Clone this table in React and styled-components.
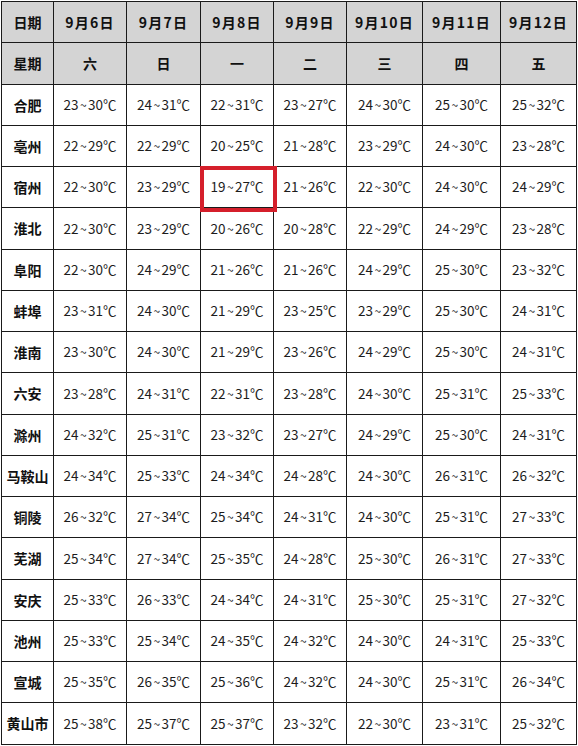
import React from "react";
import styled, { createGlobalStyle } from "styled-components";

const Global = createGlobalStyle`
  html, body { margin: 0; padding: 0; background: #ffffff; }
  body { font-family: "Noto Sans CJK SC", "Noto Sans", sans-serif; }
`;

const Wrap = styled.div`
  padding: 1px 0 0 1px;
`;

const Table = styled.table`
  border-collapse: collapse;
  table-layout: fixed;
  width: 575px;
  font-family: "Noto Sans CJK SC", "Noto Sans", sans-serif;
  color: #111;
`;

const Col = styled.col`
  width: ${(p) => p.$w}px;
`;

const Row = styled.tr`
  height: 41.25px;
`;

const Cell = styled.td`
  border: 1px solid #1a1a1a;
  padding: 0;
  text-align: center;
  vertical-align: middle;
  font-size: 14px;
  line-height: 1;
  white-space: nowrap;
`;

const HeadCell = styled(Cell)`
  background: #d4d4d4;
  font-weight: 700;
  letter-spacing: ${(p) => (p.$spaced ? "1.2px" : "0")};
`;

const CityCell = styled(Cell)`
  font-weight: 700;
  font-size: 14px;
`;

const TempCell = styled(Cell)`
  position: relative;
  font-size: 13.5px;
  color: #1c1c1c;
  &::after {
    content: "";
    display: ${(p) => (p.$mark ? "block" : "none")};
    position: absolute;
    top: -1px;
    left: -1px;
    width: 77px;
    height: 46px;
    border: 4px solid #d51f2b;
    box-sizing: border-box;
    pointer-events: none;
  }
`;

const Tilde = styled.span`
  display: inline-block;
  margin: 0 1.5px;
  font-size: 12px;
`;

const widths = [52, 73, 74, 73, 73, 76, 78, 76];
const dates = ["9月6日", "9月7日", "9月8日", "9月9日", "9月10日", "9月11日", "9月12日"];
const weekdays = ["六", "日", "一", "二", "三", "四", "五"];

const data = [
  ["合肥", "23~30", "24~31", "22~31", "23~27", "24~30", "25~30", "25~32"],
  ["亳州", "22~29", "22~29", "20~25", "21~28", "23~29", "24~30", "23~28"],
  ["宿州", "22~30", "23~29", "19~27", "21~26", "22~30", "24~30", "24~29"],
  ["淮北", "22~30", "23~29", "20~26", "20~28", "22~29", "24~29", "23~28"],
  ["阜阳", "22~30", "24~29", "21~26", "21~26", "24~29", "25~30", "23~32"],
  ["蚌埠", "23~31", "24~30", "21~29", "23~25", "23~29", "25~30", "24~31"],
  ["淮南", "23~30", "24~30", "21~29", "23~26", "24~29", "25~30", "24~31"],
  ["六安", "23~28", "24~31", "22~31", "23~28", "24~30", "25~31", "25~33"],
  ["滁州", "24~32", "25~31", "23~32", "23~27", "24~29", "25~30", "24~31"],
  ["马鞍山", "24~34", "25~33", "24~34", "24~28", "24~30", "26~31", "26~32"],
  ["铜陵", "26~32", "27~34", "25~34", "24~31", "24~30", "25~31", "27~33"],
  ["芜湖", "25~34", "27~34", "25~35", "24~28", "25~30", "26~31", "27~33"],
  ["安庆", "25~33", "26~33", "24~34", "24~31", "25~30", "25~31", "27~32"],
  ["池州", "25~33", "25~34", "24~35", "24~32", "24~30", "24~31", "25~33"],
  ["宣城", "25~35", "26~35", "25~36", "24~32", "24~30", "25~31", "26~34"],
  ["黄山市", "25~38", "25~37", "25~37", "23~32", "22~30", "23~31", "25~32"],
];

export default function App() {
  return (
    <>
      <Global />
      <Wrap>
        <Table>
          <colgroup>
            {widths.map((w, i) => (
              <Col key={i} $w={w} />
            ))}
          </colgroup>
          <thead>
            <Row>
              <HeadCell as="th">日期</HeadCell>
              {dates.map((d) => (
                <HeadCell as="th" key={d} $spaced>
                  {d}
                </HeadCell>
              ))}
            </Row>
            <Row>
              <HeadCell as="th">星期</HeadCell>
              {weekdays.map((d) => (
                <HeadCell as="th" key={d}>
                  {d}
                </HeadCell>
              ))}
            </Row>
          </thead>
          <tbody>
            {data.map(([city, ...temps]) => {
              return (
                <Row key={city}>
                  <CityCell>{city}</CityCell>
                  {temps.map((t, i) => {
                    const [lo, hi] = t.split("~");
                    return (
                      <TempCell key={i} $mark={city === "宿州" && i === 2}>
                        {lo}
                        <Tilde>~</Tilde>
                        {hi}℃
                      </TempCell>
                    );
                  })}
                </Row>
              );
            })}
          </tbody>
        </Table>
      </Wrap>
    </>
  );
}
